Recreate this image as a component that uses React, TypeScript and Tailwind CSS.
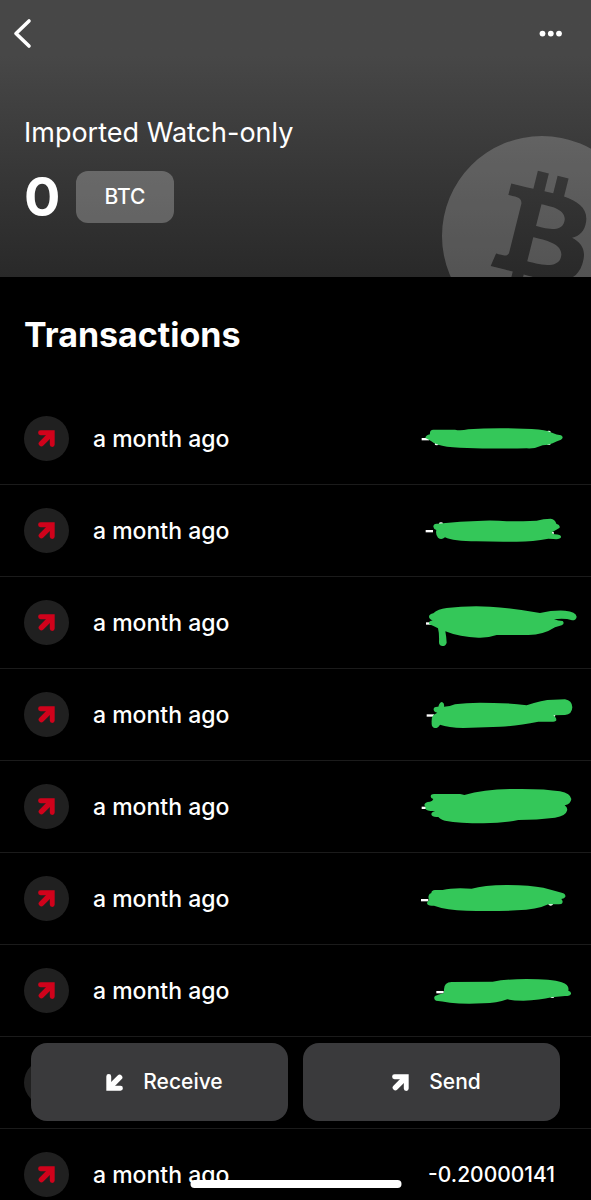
interface Scribble {
  // y of the row's top edge inside the stroke's own coordinates
  top: number;
  path: string;
  dash: { x: number; y: number };
  specks?: [number, number][];
}

interface Transaction {
  id: number;
  time?: string;
  amount?: string;
  scribble?: Scribble;
}

const transactions: Transaction[] = [
  {
    id: 1,
    time: 'a month ago',
    scribble: {
      top: -51,
      dash: { x: 35, y: 87 },
      specks: [[416, 66], [80, 102], [416, 101]],
      path: 'M46 84Q48 75 60 73Q58 60 70 59L135 59Q150 63 175 58Q250 52 340 56Q395 57 412 63L426 68Q440 74 453 76Q463 82 453 89Q438 94 428 100Q415 106 398 106Q375 117 350 115Q250 117 150 113Q105 111 85 104Q70 100 63 93Q55 89 46 84Z',
    },
  },
  {
    id: 2,
    time: 'a month ago',
    scribble: {
      top: 225,
      dash: { x: 47, y: 363 },
      specks: [[93, 341], [426, 369]],
      path: 'M70 350Q70 340 82 341Q150 334 220 332Q260 331 290 334Q340 334 380 332Q400 326 422 326Q435 327 439 341Q453 346 448 354Q438 360 427 366Q424 372 434 373Q455 373 453 382Q451 389 430 387L415 386Q370 395 320 395Q260 396 200 394Q130 394 105 382Q94 392 84 383Q76 375 79 360Q71 357 70 350Z',
    },
  },
  {
    id: 3,
    time: 'a month ago',
    scribble: {
      top: -39,
      dash: { x: 48, y: 100 },
      path: 'M57 80Q58 72 70 70Q84 57 110 54Q170 47 240 50Q310 54 390 69Q430 60 465 62Q498 65 500 80Q499 91 486 91Q465 84 432 88Q445 93 458 93Q465 101 455 106Q445 109 435 112Q400 135 355 135L260 135Q235 144 205 143Q150 142 106 124Q109 140 110 158Q107 168 98 168Q87 168 87 156Q88 130 84 115Q70 108 58 103Q54 94 68 91Q57 87 57 80Z',
    },
  },
  {
    id: 4,
    time: 'a month ago',
    scribble: {
      top: 237,
      dash: { x: 50, y: 376 },
      specks: [[430, 377]],
      path: 'M71 357Q72 349 85 350Q89 336 96 336Q104 339 102 350Q120 350 135 343Q180 336 250 339Q300 339 350 346Q395 329 430 329L465 328Q486 331 487 352Q486 374 465 375L430 376Q440 384 439 391Q435 397 415 395L385 395Q320 408 270 410L160 414Q115 412 90 404Q84 415 74 414Q64 411 65 398Q64 383 70 375L82 368Q70 365 71 357Z',
    },
  },
  {
    id: 5,
    time: 'a month ago',
    scribble: {
      top: -42,
      dash: { x: 35, y: 98 },
      path: 'M62 64Q63 57 72 57L150 57Q158 59 163 60Q220 44 300 42Q400 40 450 49Q482 56 484 72Q482 88 464 91Q474 98 471 107Q468 122 435 128Q380 135 325 135Q280 145 220 145Q150 145 105 137Q90 133 85 126Q66 128 64 118Q65 110 76 108Q50 109 46 101Q48 96 43 90Q44 81 60 80Q68 79 70 72Q62 71 62 64Z',
    },
  },
  {
    id: 6,
    time: 'a month ago',
    scribble: {
      top: 234,
      dash: { x: 33, y: 375 },
      specks: [[422, 388]],
      path: 'M56 362Q57 356 64 354Q64 346 75 345L98 345Q130 337 185 341Q220 331 290 330Q360 331 400 338Q430 346 455 353Q468 356 466 365Q464 371 454 372Q462 381 454 387Q440 388 415 388Q380 405 320 406Q240 410 170 407Q110 406 72 392Q52 394 51 385Q52 378 58 376Q54 370 56 362Z',
    },
  },
  {
    id: 7,
    time: 'a month ago',
    scribble: {
      top: -45,
      dash: { x: 79, y: 96 },
      specks: [[427, 110]],
      path: 'M102 88Q102 67 125 66L248 65Q290 57 350 57Q425 57 455 67Q479 75 475 92Q484 94 483 101Q482 108 465 108L425 112Q390 121 340 122Q310 122 292 118Q260 130 220 130Q160 133 120 128Q95 123 78 122Q69 116 75 108Q85 104 102 99Z',
    },
  },
  { id: 8 },
  { id: 9, time: 'a month ago', amount: '-0.20000141' },
];

function ArrowIcon({ className }: { className?: string }) {
  return (
    <svg
      className={className}
      width="17"
      height="17"
      viewBox="0 0 16 16"
      fill="none"
      stroke="currentColor"
      strokeLinecap="round"
      aria-hidden="true"
    >
      <path strokeWidth="4.6" d="M2.4 2.6H13.4V13.6" />
      <path strokeWidth="5.2" d="M12 4L3.2 12.8" />
    </svg>
  );
}

function BitcoinLogo() {
  return (
    <svg
      className="absolute top-[136px] -right-[51px] size-[200px] fill-white/20"
      viewBox="0 0 64 64"
      fillRule="evenodd"
      aria-hidden="true"
    >
      <path d="M32 0a32 32 0 1 0 0 64a32 32 0 1 0 0-64zM46.103 27.444c0.637-4.258-2.605-6.547-7.038-8.074l1.438-5.768-3.511-0.875-1.4,5.616c-0.923-0.23-1.871-0.447-2.813-0.662l1.41-5.653-3.509-0.875-1.439,5.766c-0.764-0.174-1.514-0.346-2.242-0.527l0.004-0.018-4.842-1.209-0.934,3.75s2.605,0.597,2.55,0.634c1.422,0.355,1.679,1.296,1.636,2.042l-3.934,15.776c-0.174,0.432-0.615,1.08-1.609,0.834,0.035,0.051-2.552-0.637-2.552-0.637l-1.743,4.019,4.569,1.139c0.85,0.213,1.683,0.436,2.503,0.646l-1.453,5.834,3.507,0.875,1.439-5.772c0.958,0.26,1.888,0.5,2.798,0.726l-1.434,5.745,3.511,0.875,1.453-5.823c5.987,1.133,10.489,0.676,12.384-4.739,1.527-4.36-0.076-6.875-3.226-8.515,2.294-0.529,4.022-2.038,4.483-5.155zm-8.022,11.249c-1.085,4.36-8.426,2.003-10.806,1.412l1.928-7.729c2.38,0.594,10.012,1.77,8.878,6.317zm1.086-11.312c-0.99,3.966-7.1,1.951-9.082,1.457l1.748-7.01c1.982,0.494,8.365,1.416,7.334,5.553z" />
    </svg>
  );
}

function HiddenAmount({ scribble }: { scribble: Scribble }) {
  const { top, path, dash, specks = [] } = scribble;

  return (
    <svg width="181" height="92" viewBox={`0 ${top} 543 276`} role="img" aria-label="Hidden amount">
      <rect x={dash.x} y={dash.y - 3} width="22" height="7" className="fill-white" />
      {specks.map(([x, y]) => (
        <ellipse key={`${x}-${y}`} cx={x} cy={y} rx="6" ry="4" className="fill-white" />
      ))}
      <path d={path} className="fill-[#34c759]" />
    </svg>
  );
}

function TransactionRow({ transaction }: { transaction: Transaction }) {
  return (
    <li className="flex h-[92px] items-center border-b border-[#1b1b1b] pl-6">
      <span className="flex size-[45px] shrink-0 items-center justify-center rounded-full bg-[#202020] text-[#d0021b]">
        <ArrowIcon />
      </span>
      <span className="ml-6 flex-1 text-[23px] leading-8 font-medium">{transaction.time}</span>
      {transaction.scribble && <HiddenAmount scribble={transaction.scribble} />}
      {transaction.amount && (
        <span className="pr-9 text-[21px] leading-8 font-medium">{transaction.amount}</span>
      )}
    </li>
  );
}

export default function App() {
  return (
    <div className="relative flex h-screen flex-col overflow-hidden bg-black font-['Inter',sans-serif] text-white">
      {/* Wallet header */}
      <header className="relative shrink-0 overflow-hidden bg-linear-to-b from-[#474747] from-20% to-[#292929] pb-[54px]">
        <BitcoinLogo />
        <nav className="flex h-[67px] items-center justify-between pr-7 pl-3">
          <button type="button" aria-label="Back">
            <svg width="22" height="32" viewBox="0 0 22 32" fill="none" stroke="currentColor" strokeWidth="3.6" strokeLinecap="round" strokeLinejoin="round">
              <path d="M17 3L4 15.5L17 28" />
            </svg>
          </button>
          <button type="button" aria-label="More options">
            <svg width="24" height="8" viewBox="0 0 24 8" fill="currentColor">
              <circle cx="3.5" cy="3.6" r="2.9" />
              <circle cx="11.8" cy="3.6" r="2.9" />
              <circle cx="20" cy="3.6" r="2.9" />
            </svg>
          </button>
        </nav>
        <div className="relative px-6 pt-12">
          <h1 className="text-[27px] leading-9 font-normal">Imported Watch-only</h1>
          <div className="flex items-center gap-4 pt-5">
            <span className="text-[54px] leading-[52px] font-bold">0</span>
            <button type="button" className="h-[52px] rounded-xl bg-white/25 px-7 text-[21px] font-medium">
              BTC
            </button>
          </div>
        </div>
      </header>

      {/* Transactions */}
      <main className="min-h-0 flex-1 overflow-y-auto [scrollbar-width:none]">
        <h2 className="px-6 py-9 text-[34px] leading-[44px] font-bold">Transactions</h2>
        <ul>
          {transactions.map((transaction) => (
            <TransactionRow key={transaction.id} transaction={transaction} />
          ))}
        </ul>
      </main>

      {/* Floating actions */}
      <div className="absolute inset-x-0 bottom-[79px] flex gap-[15px] px-[31px]">
        <button type="button" className="flex h-[78px] flex-1 items-center justify-center gap-5 rounded-2xl bg-[#3a3a3c] pl-2.5 text-[21px] leading-8 font-medium">
          <ArrowIcon className="rotate-180" />
          Receive
        </button>
        <button type="button" className="flex h-[78px] flex-1 items-center justify-center gap-5 rounded-2xl bg-[#3a3a3c] pl-2.5 text-[21px] leading-8 font-medium">
          <ArrowIcon />
          Send
        </button>
      </div>

      {/* Home indicator */}
      <div className="absolute bottom-3 left-1/2 h-2 w-[211px] -translate-x-1/2 rounded-full bg-white" />
    </div>
  );
}
